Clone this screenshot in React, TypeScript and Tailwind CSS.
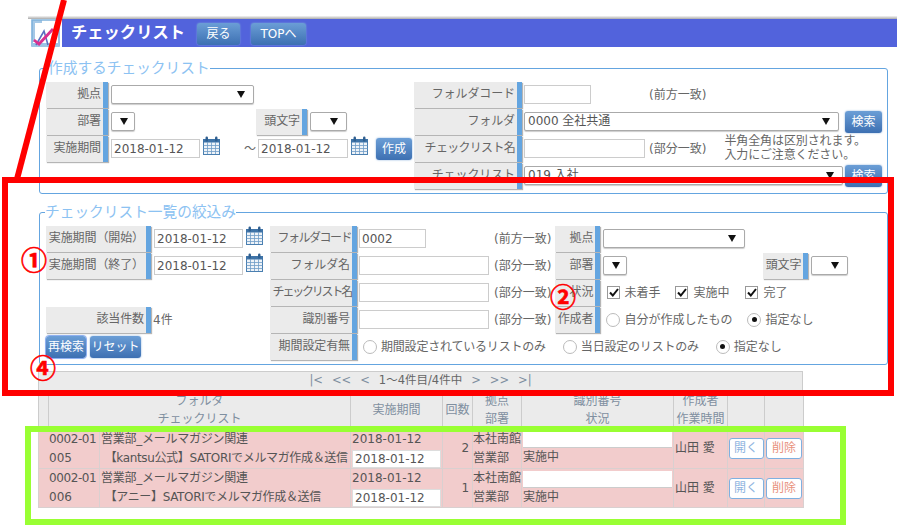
const FONT = "font-['DejaVu_Sans','Noto_Sans_CJK_JP',sans-serif]";
const MARK = "absolute text-[26px] leading-[26px] font-bold text-[#ff0000] [-webkit-text-stroke:0.6px_#ff0000] font-['Noto_Sans_CJK_JP',sans-serif]";

function Label({ w, children, className = "" }: { w: string; children: React.ReactNode; className?: string }) {
  return (
    <div className={`${w} h-[26px] shrink-0 flex items-center justify-end bg-[#ebebeb] border-r-[5px] border-r-[#64a5e0] pr-[2px] pb-[2px] shadow-[1px_1px_1px_#b5b5b5] text-[12px] tracking-[-0.1px] text-[#666] whitespace-nowrap ${className}`}>
      {children}
    </div>
  );
}

function Sel({ w, children, className = "" }: { w: string; children?: React.ReactNode; className?: string }) {
  return (
    <div className={`${w} h-[19px] -mt-[1px] shrink-0 flex items-center justify-between pl-[3px] pr-[4px] bg-white border border-[#aaa] rounded-[2px] shadow-[0_1px_1px_#ccc] text-[12px] text-[#555] ${className}`}>
      <span className="whitespace-nowrap">{children}</span>
      <svg width="8" height="7" viewBox="0 0 8 7" className="shrink-0 mr-[4px]"><path d="M0 0h8L4 7z" fill="#111" /></svg>
    </div>
  );
}

function Inp({ w, value, className = "" }: { w: string; value?: string; className?: string }) {
  return (
    <div className={`${w} h-[19px] shrink-0 flex items-center pl-[2px] bg-white border border-[#ccc] text-[12px] text-[#555] ${className}`}>{value}</div>
  );
}

function Cal({ className = "" }: { className?: string }) {
  return (
    <svg width="17" height="19" viewBox="0 0 17 19" className={`shrink-0 ${className}`}>
      <rect x="0.5" y="3.5" width="16" height="15" fill="#eef3f8" stroke="#4a7fb0" />
      <rect x="0" y="3" width="17" height="3.5" fill="#3f74a8" />
      <path d="M0.5 9.5h16M0.5 12.5h16M0.5 15.5h16M4.5 6v12M8.5 6v12M12.5 6v12" stroke="#6f9cc6" strokeWidth="0.8" fill="none" />
      <rect x="2.5" y="0.5" width="2.5" height="5" rx="1.2" fill="#2f5f90" />
      <rect x="12" y="0.5" width="2.5" height="5" rx="1.2" fill="#2f5f90" />
    </svg>
  );
}

function Btn({ w, children, className = "" }: { w: string; children: React.ReactNode; className?: string }) {
  return (
    <div className={`${w} h-[22px] shrink-0 flex items-center justify-center rounded-[3px] bg-gradient-to-b from-[#6b9ed6] to-[#3d70b2] shadow-[0_0_2px_#7fa8d8] text-[12px] text-white whitespace-nowrap ${className}`}>{children}</div>
  );
}

function Radio({ on }: { on?: boolean }) {
  return (
    <span className="w-[14px] h-[14px] rounded-full border border-[#bbb] bg-white flex items-center justify-center shrink-0">
      {on && <span className="w-[5px] h-[5px] rounded-full bg-[#111]" />}
    </span>
  );
}

function Check() {
  return (
    <span className="w-[13px] h-[13px] border border-[#999] bg-white flex items-center justify-center shrink-0">
      <svg width="10" height="9" viewBox="0 0 10 9"><path d="M1 4.5L3.8 7.5L9 1" stroke="#111" strokeWidth="2" fill="none" /></svg>
    </span>
  );
}

function Row({ children, className = "" }: { children?: React.ReactNode; className?: string }) {
  return <div className={`h-[27px] flex items-center text-[12px] text-[#666] ${className}`}>{children}</div>;
}

function Suffix({ children, className = "" }: { children: React.ReactNode; className?: string }) {
  return <span className={`whitespace-nowrap text-[12px] text-[#666] ${className}`}>{children}</span>;
}

function Fieldset({ title, legendClass, children, className = "" }: { title: string; legendClass: string; children: React.ReactNode; className?: string }) {
  return (
    <fieldset className={`ml-[39px] w-[849px] border border-[#64a5e0] rounded-[3px] min-w-0 ${className}`}>
      <legend className={`text-[14.7px] leading-[20px] text-[#8cc2f2] whitespace-nowrap ${legendClass}`}>{title}</legend>
      {children}
    </fieldset>
  );
}

function Logo() {
  return (
    <svg width="30" height="28" viewBox="0 0 30 28" className="shrink-0">
      <path d="M1 1h27v26H1z" fill="#fff" stroke="#7fb2dc" strokeWidth="1.6" />
      <path d="M1 1h10v3H4v19H1z" fill="#7fb0dc" opacity="0.7" />
      <path d="M1 24h27v3H1z" fill="#9cc4e6" />
      <path d="M5 26L13 12L17 26" stroke="#5a6fc0" strokeWidth="1.6" fill="none" />
      <path d="M3 21l5 4L22 10" stroke="#d9308f" strokeWidth="2.8" fill="none" />
    </svg>
  );
}

function HeaderCell({ a, b, colSpan }: { a?: string; b?: string; colSpan?: number }) {
  return (
    <th colSpan={colSpan} className="border border-[#ccc] font-normal text-[12px] leading-[18px] text-[#7f8fa0] text-center align-middle px-0 py-0">
      <div>{a}</div>
      {b && <div>{b}</div>}
    </th>
  );
}

function BodyRow({ code, num, name, count, h, top }: { code: string; num: string; name: string; count: string; h: string; top: string }) {
  const td = "border border-[#d9d0d0] align-top p-0 bg-[#f2cccc] text-[12px] leading-[19px] text-[#555] whitespace-nowrap";
  return (
    <tr className={h}>
      <td colSpan={2} className={`${td} pl-[10px]`}>
        <div className={`${top} tracking-[-0.4px]`}>{code}</div>
        <div>{num}</div>
      </td>
      <td className={`${td} pl-[1px] tracking-[-0.25px]`}>
        <div className={top}>営業部_メールマガジン関連</div>
        <div className="-ml-[2px] tracking-[-0.35px]">{name}</div>
      </td>
      <td className={td}>
        <div className={`${top} pl-[1px] h-[19px]`}>2018-01-12</div>
        <Inp w="w-[89px] ml-[1px]" value="2018-01-12" className="!h-[18px] mt-[1px] border-[#ddd]" />
      </td>
      <td className={`${td} !align-middle text-right pr-[3px]`}>{count}</td>
      <td className={td}>
        <div className={top}>本社南館</div>
        <div>営業部</div>
      </td>
      <td className={td}>
        <div className="mt-[2px] ml-[1px] w-[149px] h-[17px] bg-white border-b border-[#ccc]" />
        <div className="ml-[1px]">実施中</div>
      </td>
      <td className={`${td} !align-middle pl-[1px]`}>山田 愛</td>
      <td className={`${td} !align-middle`}>
        <div className="mx-auto w-[35px] h-[21px] flex items-center justify-center bg-white border border-[#7fb0e0] rounded-[3px] text-[#8fb4e0]">開く</div>
      </td>
      <td className={`${td} !align-middle`}>
        <div className="mx-auto w-[36px] h-[21px] flex items-center justify-center bg-white border border-[#7fb0e0] rounded-[3px] text-[#e8917c]">削除</div>
      </td>
    </tr>
  );
}

export default function App() {
  return (
    <div className={`relative w-[897px] h-[525px] overflow-hidden bg-white ${FONT}`}>
      <div className="pt-[16px]">
        <div className="h-[3px] ml-[28px] bg-gradient-to-b from-[#f4f4f4] to-[#aaa]" />
        <div className="flex h-[28px] ml-[31px]">
          <Logo />
          <div className="ml-[1px] flex-1 flex items-center bg-[#5263dc] pl-[9px]">
            <span className="w-[126px] text-[16.3px] font-bold text-white whitespace-nowrap">チェックリスト</span>
            <Btn w="w-[43px]" className="mt-[1px]">戻る</Btn>
            <Btn w="w-[55px]" className="ml-[11px] mt-[1px]">TOPへ</Btn>
          </div>
        </div>
      </div>

      <Fieldset title="作成するチェックリスト" legendClass="ml-[2px]" className="mt-[11px] pt-[3px] pb-[4px] pl-[6px]">
        <div className="flex">
          <div className="w-[368px] shrink-0">
            <Row>
              <Label w="w-[62px]">拠点</Label>
              <Sel w="w-[143px]" className="ml-[3px]" />
            </Row>
            <Row>
              <Label w="w-[62px]">部署</Label>
              <Sel w="w-[24px]" className="ml-[3px] !pl-0 !pr-[2px]" />
              <Label w="w-[51px]" className="ml-[121px]">頭文字</Label>
              <Sel w="w-[37px]" className="ml-[3px]" />
            </Row>
            <Row>
              <Label w="w-[62px]">実施期間</Label>
              <Inp w="w-[89px]" value="2018-01-12" className="ml-[3px]" />
              <Cal className="ml-[3px] -mt-[6px]" />
              <span className="ml-[24px] w-[14px] text-[#666]">～</span>
              <Inp w="w-[90px]" value="2018-01-12" />
              <Cal className="ml-[3px] -mt-[6px]" />
              <Btn w="w-[36px]" className="ml-[8px]">作成</Btn>
            </Row>
          </div>
          <div>
            <Row>
              <Label w="w-[108px]">フォルダコード</Label>
              <Inp w="w-[67px]" className="ml-[2px]" />
              <Suffix className="ml-[58px]">(前方一致)</Suffix>
            </Row>
            <Row>
              <Label w="w-[108px]">フォルダ</Label>
              <Sel w="w-[315px]" className="ml-[2px]">0000 全社共通</Sel>
              <Btn w="w-[37px]" className="ml-[6px]">検索</Btn>
            </Row>
            <Row>
              <Label w="w-[108px]" className="tracking-[-0.7px]">チェックリスト名</Label>
              <Inp w="w-[121px]" className="ml-[2px]" />
              <Suffix className="ml-[4px]">(部分一致)</Suffix>
              <div className="ml-[18px] -mt-[2px] leading-[14px] tracking-[-0.1px] whitespace-nowrap text-[12px] text-[#666]">
                <div>半角全角は区別されます。</div>
                <div>入力にご注意ください。</div>
              </div>
            </Row>
            <Row>
              <Label w="w-[108px]">チェックリスト</Label>
              <Sel w="w-[319px]" className="ml-[2px]">019 入社</Sel>
              <Btn w="w-[37px]" className="ml-[2px]">検索</Btn>
            </Row>
          </div>
        </div>
      </Fieldset>

      <Fieldset title="チェックリスト一覧の絞込み" legendClass="-ml-[1px]" className="mt-[8px] pt-[3px] pb-[4px] pl-[6px]">
        <div className="flex">
          <div className="w-[224px] shrink-0">
            <Row>
              <Label w="w-[105px]">実施期間（開始）</Label>
              <Inp w="w-[89px]" value="2018-01-12" className="ml-[3px]" />
              <Cal className="ml-[3px] -mt-[6px]" />
            </Row>
            <Row>
              <Label w="w-[105px]">実施期間（終了）</Label>
              <Inp w="w-[89px]" value="2018-01-12" className="ml-[3px]" />
              <Cal className="ml-[3px] -mt-[6px]" />
            </Row>
            <Row />
            <Row>
              <Label w="w-[105px]">該当件数</Label>
              <span className="ml-[2px]">4件</span>
            </Row>
            <Row className="gap-[4px]">
              <Btn w="w-[40px]" className="outline outline-[#8fb0f0]">再検索</Btn>
              <Btn w="w-[51px]">リセット</Btn>
            </Row>
          </div>
          <div>
            <Row>
              <Label w="w-[87px]" className="!pr-[1px] tracking-[-1.5px]">フォルダコード</Label>
              <Inp w="w-[67px]" value="0002" className="ml-[2px]" />
              <Suffix className="ml-[68px]">(前方一致)</Suffix>
              <Label w="w-[45px]" className="ml-[4px]">拠点</Label>
              <Sel w="w-[142px]" className="ml-[3px]" />
            </Row>
            <Row>
              <Label w="w-[87px]">フォルダ名</Label>
              <Inp w="w-[130px]" className="ml-[2px]" />
              <Suffix className="ml-[5px]">(部分一致)</Suffix>
              <Label w="w-[45px]" className="ml-[4px]">部署</Label>
              <Sel w="w-[24px]" className="ml-[3px] !pl-0 !pr-[2px]" />
              <Label w="w-[45px]" className="ml-[136px]">頭文字</Label>
              <Sel w="w-[37px]" className="ml-[3px]" />
            </Row>
            <Row>
              <Label w="w-[87px]" className="!pr-[1px] tracking-[-2.2px]">チェックリスト名</Label>
              <Inp w="w-[130px]" className="ml-[2px]" />
              <Suffix className="ml-[5px]">(部分一致)</Suffix>
              <Label w="w-[45px]" className="ml-[4px]">状況</Label>
              <span className="ml-[7px] flex items-center gap-[4px]"><Check />未着手</span>
              <span className="ml-[15px] flex items-center gap-[5px]"><Check />実施中</span>
              <span className="ml-[16px] flex items-center gap-[5px]"><Check />完了</span>
            </Row>
            <Row>
              <Label w="w-[87px]">識別番号</Label>
              <Inp w="w-[130px]" className="ml-[2px]" />
              <Suffix className="ml-[5px]">(部分一致)</Suffix>
              <Label w="w-[45px]" className="ml-[4px]">作成者</Label>
              <span className="ml-[6px] flex items-center gap-[4px]"><Radio />自分が作成したもの</span>
              <span className="ml-[15px] flex items-center gap-[4px]"><Radio on />指定なし</span>
            </Row>
            <Row>
              <Label w="w-[87px]">期間設定有無</Label>
              <span className="ml-[6px] flex items-center gap-[4px] tracking-[-0.2px]"><Radio />期間設定されているリストのみ</span>
              <span className="ml-[17px] flex items-center gap-[4px] tracking-[-0.2px]"><Radio />当日設定のリストのみ</span>
              <span className="ml-[17px] flex items-center gap-[4px]"><Radio on />指定なし</span>
            </Row>
          </div>
        </div>
      </Fieldset>

      <div className="ml-[38px] mt-[6px] w-[765px]">
        <div className="h-[20px] bg-[#ebebeb] border border-[#ccc] flex items-center justify-center gap-[9px] text-[11.5px] text-[#7f8fa0] whitespace-pre">
          <span>|&lt;</span><span>&lt;&lt;</span><span>&lt;</span><span className="text-[#666]">1～4件目/4件中</span><span>&gt;</span><span>&gt;&gt;</span><span>&gt;|</span>
        </div>
        <table className="w-[765px] table-fixed border-collapse bg-[#ebebeb]">
          <colgroup>
            <col className="w-[10px]" />
            <col className="w-[51px]" />
            <col className="w-[251px]" />
            <col className="w-[92px]" />
            <col className="w-[30px]" />
            <col className="w-[49px]" />
            <col className="w-[152px]" />
            <col className="w-[54px]" />
            <col className="w-[37px]" />
            <col className="w-[39px]" />
          </colgroup>
          <thead>
            <tr className="h-[37px]">
              <HeaderCell />
              <HeaderCell colSpan={2} a="フォルダ" b="チェックリスト" />
              <HeaderCell a="実施期間" />
              <HeaderCell a="回数" />
              <HeaderCell a="拠点" b="部署" />
              <HeaderCell a="識別番号" b="状況" />
              <HeaderCell a="作成者" b="作業時間" />
              <HeaderCell />
              <HeaderCell />
            </tr>
          </thead>
          <tbody>
            <BodyRow h="h-[40px]" top="mt-[1px]" code="0002-01" num="005" name="　【kantsu公式】SATORIでメルマガ作成＆送信" count="2" />
            <BodyRow h="h-[38px]" top="mt-0" code="0002-01" num="006" name="　【アニー】SATORIでメルマガ作成＆送信" count="1" />
          </tbody>
        </table>
      </div>

      {/* Annotations drawn over the screen */}
      <svg className="absolute left-0 top-0 pointer-events-none" width="897" height="525">
        <path d="M64 0L17 179" stroke="#ff0000" strokeWidth="6" fill="none" />
      </svg>
      <div className="absolute left-[2px] top-[177px] w-[892px] h-[219px] border-[6px] border-[#ff0000] pointer-events-none" />
      <div className="absolute left-[25px] top-[426px] w-[821px] h-[99px] border-[6px] border-[#99ff33] pointer-events-none" />
      <span className={`${MARK} left-[21px] top-[246px]`}>①</span>
      <span className={`${MARK} left-[550px] top-[283px]`}>②</span>
      <span className={`${MARK} left-[30px] top-[354px]`}>④</span>
    </div>
  );
}
